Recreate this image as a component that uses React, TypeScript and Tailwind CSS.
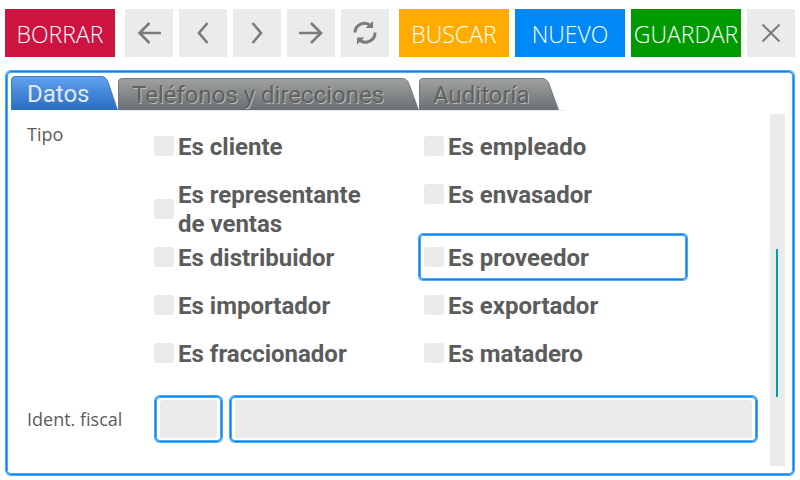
import React from "react";

const frame =
  "border border-[#0585f2] shadow-[0_0_0_1px_#4faaf8,inset_0_0_0_1px_#4faaf8]";

function TextButton({ label, color }: { label: string; color: string }) {
  return (
    <button
      type="button"
      className={`h-12 flex-[110_1_0px] whitespace-nowrap pt-[2px] text-center text-[23px] leading-[46px] font-light text-white ${color}`}
    >
      {label}
    </button>
  );
}

function IconButton({ label, children }: { label: string; children: React.ReactNode }) {
  return (
    <button type="button" aria-label={label} className="size-12 shrink-0 bg-[#eaeceb]">
      <svg viewBox="0 0 48 48" className="size-12" fill="none" stroke="#7b7b7b" strokeWidth="2.6">
        {children}
      </svg>
    </button>
  );
}

function Tab({ label, width, active }: { label: string; width: number; active?: boolean }) {
  const h = active ? 34 : 32;
  const id = active ? "tab-on" : "tab-off";
  const r = width - 12;
  return (
    <button
      type="button"
      role="tab"
      aria-selected={!!active}
      className={`relative shrink-0 text-left font-[Roboto] text-[24px] ${
        active
          ? "h-[34px] pl-4 leading-[36px] text-[#e3e8ef]"
          : "h-8 pl-[14px] leading-[34px] text-[#606060] [text-shadow:1px_1px_0_#b9bbbb]"
      }`}
      style={{ width }}
    >
      <svg className="absolute inset-0" width={width} height={h} aria-hidden="true">
        <defs>
          <linearGradient id={id} x1="0" y1="0" x2="0" y2="1">
            <stop offset="0" stopColor={active ? "#5fa2f0" : "#a0a1a1"} />
            <stop offset="1" stopColor={active ? "#2a6cbe" : "#697073"} />
          </linearGradient>
        </defs>
        <path
          d={`M0.5 ${h}V4Q0.5 0.5 4 0.5H${r - 5}Q${r} 0.5 ${r + 2} 6L${width - 0.5} ${h}`}
          fill={`url(#${id})`}
          stroke={active ? "#4a7db8" : "#737d80"}
        />
      </svg>
      <span className="relative">{label}</span>
    </button>
  );
}

const kinds = [
  "Es cliente",
  "Es empleado",
  "Es representante de ventas",
  "Es envasador",
  "Es distribuidor",
  "Es proveedor",
  "Es importador",
  "Es exportador",
  "Es fraccionador",
  "Es matadero",
];

function Kind({ label }: { label: string }) {
  const focused = label === "Es proveedor";
  return (
    <label
      className={`m-px flex items-center gap-1 self-start rounded-[4px] pt-[6px] pr-8 pl-1 ${
        focused ? `pb-[6px] ${frame}` : "border border-transparent"
      }`}
    >
      <input type="checkbox" className="size-5 shrink-0 appearance-none rounded-[3px] bg-[#eaeceb]" />
      <span className="pt-[3px] font-[Roboto] text-[24px] leading-[29px] font-bold text-[#5c5c5c]">{label}</span>
    </label>
  );
}

export default function App() {
  return (
    <div className="bg-white px-[5px] pt-[9px] pb-[5px] font-['Open_Sans',sans-serif] text-[#5c5c5c]">
      <div className="flex gap-[6px]">
        <TextButton label="BORRAR" color="bg-[#cd133f]" />
        <div className="mx-1 flex gap-[6px]">
          <IconButton label="Primero">
            <path d="M36 24H14.500M24.500 14L14.500 24L24.500 34" />
          </IconButton>
          <IconButton label="Anterior">
            <path d="M28.500 14L20 24L28.500 34" />
          </IconButton>
          <IconButton label="Siguiente">
            <path d="M19.500 14L28 24L19.500 34" />
          </IconButton>
          <IconButton label="Último">
            <path d="M12 24H34M24 14L34 24L24 34" />
          </IconButton>
          <IconButton label="Actualizar">
            <path
              d="M14 23.500A9.500 9.500 0 0 1 29.500 16.500M34 23.500A9.500 9.500 0 0 1 18.500 31"
              strokeWidth="3"
            />
            <path d="M32 12V19H24.500ZM16 35.500V28.500H23.500Z" fill="#7b7b7b" stroke="none" />
          </IconButton>
        </div>
        <TextButton label="BUSCAR" color="bg-[#ffab00]" />
        <TextButton label="NUEVO" color="bg-[#0088f7]" />
        <TextButton label="GUARDAR" color="bg-[#009a00]" />
        <IconButton label="Cerrar">
          <path d="M15.500 15.500L32.500 32.500M32.500 15.500L15.500 32.500" strokeWidth="2" />
        </IconButton>
      </div>

      <main className={`mx-px mt-[14px] rounded-[5px] pt-1 pr-2 pb-2 pl-1 ${frame}`}>
        <div role="tablist" className="flex items-end">
          <Tab label="Datos" width={107} active />
          <Tab label="Teléfonos y direcciones" width={301} />
          <Tab label="Auditoría" width={140} />
        </div>
        <div className="ml-[107px] h-px w-[447px] bg-[#e8e9e9]" />

        <div className="mt-[3px] flex">
          <form className="min-w-0 flex-1 pl-4">
            <div role="group" aria-labelledby="kinds-label" className="flex pt-2">
              <div id="kinds-label" className="w-[121px] shrink-0 text-[18px] leading-[24px]">
                Tipo
              </div>
              <div className="grid max-w-[540px] flex-1 grid-cols-2 grid-rows-[48px_63px_48px_48px_48px]">
                {kinds.map((k) => (
                  <Kind key={k} label={k} />
                ))}
              </div>
            </div>
            <div className="mt-[18px] flex items-center">
              <label htmlFor="fiscal-type" className="w-[127px] shrink-0 text-[18px] leading-[26px]">
                Ident. fiscal
              </label>
              <div className={`m-px w-[67px] rounded-[5px] px-1 py-[3px] ${frame}`}>
                <input id="fiscal-type" className="block h-[38px] w-full rounded-[3px] bg-[#eaeceb] px-2 outline-none" />
              </div>
              <div className={`my-px mr-[13px] ml-[7px] flex-1 rounded-[5px] px-1 py-[3px] ${frame}`}>
                <input
                  aria-label="Número de identificación fiscal"
                  className="block h-[38px] w-full rounded-[3px] bg-[#eaeceb] px-2 outline-none"
                />
              </div>
            </div>
          </form>
          <div className="h-[352px] w-[15px] shrink-0 bg-[#eaeceb] pt-[135px] pl-[6px]">
            <div className="h-[148px] w-[2px] bg-[#00a0b0]" />
          </div>
        </div>
      </main>
    </div>
  );
}
